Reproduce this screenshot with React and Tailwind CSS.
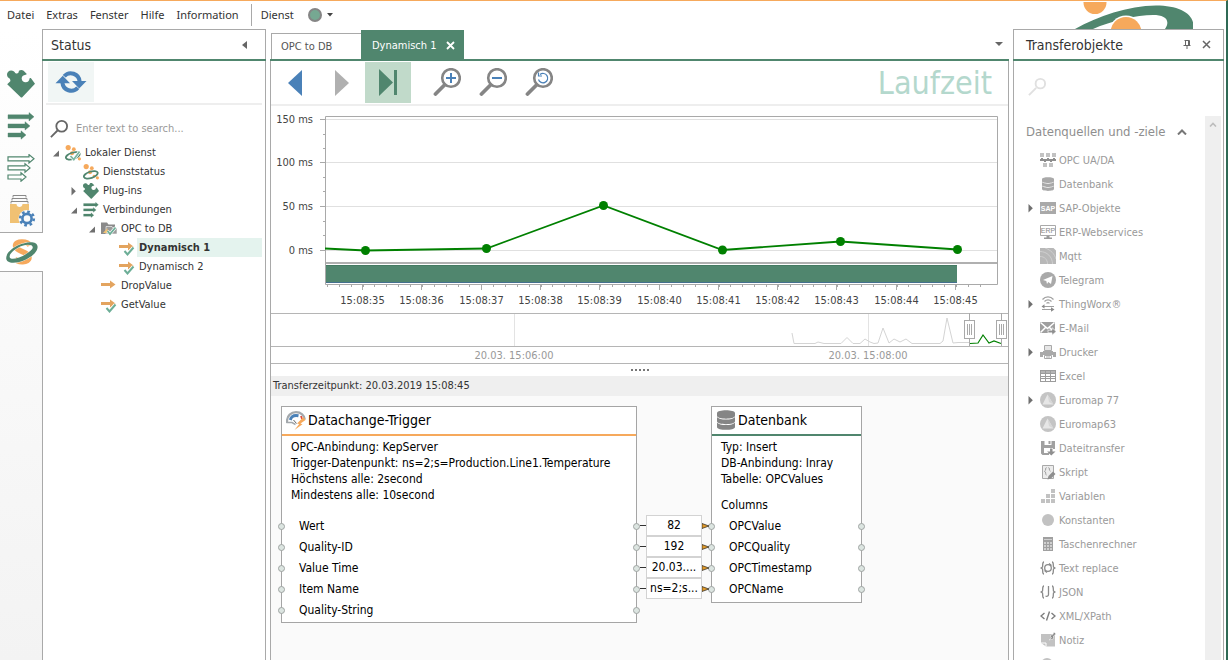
import React from "react";

const GREEN = "#50866e";
const ORANGE = "#f6a95c";
const BLUE = "#4a81b8";

/* ---------- icons ---------- */

function Puzzle({ className }) {
  return (
    <svg viewBox="0 0 28 28" className={className} fill={GREEN}>
      <path d="M.2 14.200 L3.300 11.200 C3.600 10.400 3.200 9.600 2.600 8.600 C1 8 0 6.300 0 4.600 C0 2 1.800 .4 4.200 .4 C6 .4 7.600 1.300 8.200 3 C9.600 3.800 10.600 3.600 11.400 2.800 L12 .8 C13.200 -.2 15.400 -.2 16.600 .8 L19.800 4 C19.200 5 18.300 4.800 17 5.200 C15.300 5.800 14.600 7.200 14.700 8.800 C14.900 11.100 16.700 12.400 18.800 12.200 C20.900 12 22.400 10.700 22.500 8.700 C22.600 7.800 23.200 7.600 24.200 8.400 L28 13.800 L15 27.600 H14 Z" />
    </svg>
  );
}

function Arrows({ className, outline }) {
  const p = outline
    ? { fill: "#fff", stroke: GREEN, strokeWidth: 1.2 }
    : { fill: GREEN, stroke: GREEN, strokeWidth: 0.4 };
  return (
    <svg viewBox="0 0 28 28" className={className} {...p}>
      <path d="M1 2.800 H22 V.6 L27 4.800 L22 9 V6.800 H1 Z" />
      <path d="M1 11.900 H18 V9.700 L23 13.900 L18 18.100 V15.900 H1 Z" />
      <path d="M1 21 H14 V18.800 L19 23 L14 27.200 V25 H1 Z" />
    </svg>
  );
}

function FilesGear({ className }) {
  return (
    <svg viewBox="0 0 26 32" className={className}>
      <path d="M3 2.500 V.5 H16 V2.500 M2 5.500 V3.500 H17 V5.500 M1 8.500 V6.500 H18 V8.500" fill="none" stroke="#8a8a8a" strokeWidth="1" />
      <path d="M0 9 H6.500 C6.500 13 12.500 13 12.500 9 H19 V28 H0 Z" fill="#f0c173" />
      <circle cx="17" cy="23.500" r="8.500" fill="#fafafa" />
      <circle cx="17" cy="23.500" r="6.800" fill="none" stroke={BLUE} strokeWidth="2.600" strokeDasharray="2.670 2.670" />
      <circle cx="17" cy="23.500" r="4.600" fill="none" stroke={BLUE} strokeWidth="2.600" />
    </svg>
  );
}

function ServiceLogo({ className }) {
  return (
    <svg viewBox="0 0 32 26" className={className} fill="none">
      <path d="M24 6.500 C21.500 1.800 9.500 1.500 9.500 7 C9.500 12 23 13 23 18.500 C23 24 11.500 24 8.500 19.500" stroke={ORANGE} strokeWidth="5.500" />
      <path
        fill={GREEN}
        fillRule="evenodd"
        stroke="#fff"
        strokeWidth=".9"
        paintOrder="stroke"
        d="M.3 20 C-1 12 14 3 26 3.300 C33 3.600 33 10 28.500 14.500 C21 22 7 26 2 22.500 C1 21.800 .5 21 .3 20 Z M3.800 18.500 C5.500 22.500 21 16.500 26 10.300 C29 6 22.500 4.800 16.500 6.800 C9.500 9 2.500 15 3.800 18.500 Z"
      />
    </svg>
  );
}

function Refresh({ className }) {
  return (
    <svg viewBox="0 0 32 24" className={className} fill="none">
      <path d="M9.200 6.300 A8.800 8.800 0 0 1 24.600 11.500" stroke={BLUE} strokeWidth="4" />
      <path d="M22.800 17.700 A8.800 8.800 0 0 1 7.400 12.500" stroke={BLUE} strokeWidth="4" />
      <path d="M.5 13.300 L7.800 5.800 L15 13.300 Z M17 11 H31.500 L24.200 18.500 Z" fill={BLUE} />
    </svg>
  );
}

function Magnifier({ className, stroke = "#848484", width = 2, r = 6 }) {
  return (
    <svg viewBox="0 0 20 20" className={className} fill="none" stroke={stroke} strokeWidth={width}>
      <circle cx="13" cy="7" r={r} />
      <path d="M8.600 11.400 L1 19" />
    </svg>
  );
}

function ZoomGlass({ children }) {
  return (
    <svg viewBox="0 0 28 28" className="h-7 w-7" fill="none">
      <circle cx="18" cy="10" r="8.800" stroke="#858585" strokeWidth="2.600" />
      <path d="M11.500 17 L2.500 26" stroke="#858585" strokeWidth="3.800" strokeLinecap="round" />
      {children}
    </svg>
  );
}

function MiniService({ className, check }) {
  return (
    <svg viewBox="0 0 16 16" className={className}>
      <circle cx="3.200" cy="2.600" r="2.600" fill={ORANGE} />
      <circle cx="8.800" cy="4.200" r="1.900" fill={ORANGE} />
      <circle cx="7" cy="8.300" r="2" fill={ORANGE} />
      <circle cx="14.400" cy="13.800" r="1.600" fill={ORANGE} />
      <circle cx="11" cy="12" r="1.300" fill={ORANGE} />
      <ellipse cx="7.800" cy="10.800" rx="7.200" ry="3.200" transform="rotate(-18 7.800 10.800)" fill="none" stroke={GREEN} strokeWidth="1.800" />
      {check && <path d="M5.500 11 L8.800 14.500 L14.500 6.500" fill="none" stroke="#fff" strokeWidth="3.200" />}
      {check && <path d="M5.500 11 L8.800 14.500 L14.500 6.500" fill="none" stroke="#7db7a2" strokeWidth="1.800" />}
    </svg>
  );
}

function FolderIcon({ className }) {
  return (
    <svg viewBox="0 0 16 16" className={className}>
      <path d="M0 1.500 H6 L7.500 3.500 H14 V13 H0 Z" fill="#8a8a8a" />
      <path d="M5 5.500 H11 L12 7 H16 V13 H5 Z" fill="#9b9b9b" stroke="#fff" strokeWidth=".6" />
      <path d="M2 12 L6.500 7 V9 L10 12 Z" fill="#f0c173" />
      <path d="M6.500 10 L9 13 L14.500 6.500" fill="none" stroke="#fff" strokeWidth="3" />
      <path d="M6.500 10 L9 13 L14.500 6.500" fill="none" stroke="#6dae97" strokeWidth="1.800" />
    </svg>
  );
}

function Transfer({ className, check }) {
  return (
    <svg viewBox="0 0 16 16" className={className}>
      <path d="M0 5 H9 V2.500 L14.500 6.500 L9 10.500 V8 H0 Z" fill="#e3a45f" />
      {check && (
        <>
          <path d="M5.500 11 L8.500 14.500 L14.500 7.500" fill="none" stroke="#fff" strokeWidth="3.500" />
          <path d="M5.500 11 L8.500 14.500 L14.500 7.500" fill="none" stroke="#6dae97" strokeWidth="2" />
        </>
      )}
    </svg>
  );
}

function DatabaseIcon({ className, color }) {
  return (
    <svg viewBox="0 0 18 20" className={className} fill={color}>
      <path d="M0 3 C0 -.8 18 -.8 18 3 V5.800 C18 9.600 0 9.600 0 5.800 Z" />
      <path d="M0 7 C2 10.400 16 10.400 18 7 V11.300 C18 15.100 0 15.100 0 11.300 Z" />
      <path d="M0 12.500 C2 15.900 16 15.900 18 12.500 V17 C18 20.800 0 20.800 0 17 Z" />
    </svg>
  );
}

function GaugeIcon({ className }) {
  return (
    <svg viewBox="0 0 20 19" className={className} fill="none">
      <path d="M1.200 12 C0 4 6 1.200 10 1.200 C15 1.200 18.500 4.500 18.800 8.500" stroke="#a3a8ac" strokeWidth="2.200" />
      <path d="M4.300 9 C5.300 5.200 8.500 4 12.500 4.800" stroke={BLUE} strokeWidth="3" />
      <path d="M1 11.500 H6 L9.500 13.500" stroke="#a3a8ac" strokeWidth="1.500" />
      <path d="M7.500 9 L10.500 12.500" stroke="#666" strokeWidth="1" />
      <path d="M15 5 L16 8" stroke="#e04b3a" strokeWidth="1.800" />
      <path d="M17.500 6 L11 12.500 L13.200 13 L8.500 19 L16.500 13.200 L14.500 12.500 L19.500 9 Z" fill={ORANGE} />
    </svg>
  );
}

const G1 = "#a9a9a9";
const G2 = "#c2c2c2";

const smallIcons = {
  opc: (
    <g fill={G2}>
      <path d="M0 1 h4 v4 h-4 z M6 1 h4 v4 h-4 z M12 1 h4 v4 h-4 z M3 11 h4 v4 h-4 z M9 11 h4 v4 h-4 z" />
      <path fill="#8d8d8d" d="M0 7 h16 v2 h-16 z M1 6 h2 v1 h-2 z M7 6 h2 v1 h-2 z M13 6 h2 v1 h-2 z M4 9 h2 v1 h-2 z M10 9 h2 v1 h-2 z" />
    </g>
  ),
  db: (
    <g fill={G1}>
      <path d="M2 3 C2 .5 14 .5 14 3 V5.300 C14 7.600 2 7.600 2 5.300 Z" />
      <path d="M2 6 C4 8.300 12 8.300 14 6 V9.200 C14 11.500 2 11.500 2 9.200 Z" />
      <path d="M2 10 C4 12.200 12 12.200 14 10 V13 C14 15.500 2 15.500 2 13 Z" />
    </g>
  ),
  sap: (
    <g>
      <rect y="2" width="16" height="12" fill={G1} />
      <text x="8" y="11" textAnchor="middle" fontSize="7" fontFamily="Liberation Sans, sans-serif" fontWeight="700" fill="#fff">SAP</text>
    </g>
  ),
  erp: (
    <g>
      <path d="M.5 1.500 h15 v10 h-15 z" fill="#fff" stroke={G1} />
      <text x="8" y="9" textAnchor="middle" fontSize="7" fontFamily="Liberation Sans, sans-serif" fill="#888">ERP</text>
      <path d="M6.500 12 h3 v1.500 h2.500 v1.500 h-8 v-1.500 h2.500 z" fill="#999" />
    </g>
  ),
  mqtt: (
    <g>
      <rect width="16" height="16" fill="#b8b8b8" />
      <path d="M0 3.500 C7 3.500 12.500 9 12.500 16 M0 8.500 C4.500 8.500 7.500 11.500 7.500 16 M5 0 C11 2 14.500 6 16 11" stroke="#cfcfcf" strokeWidth="1" fill="none" />
      <path d="M13.500 0 h2.500 v2.500 z" fill="#fff" />
    </g>
  ),
  telegram: (
    <g>
      <circle cx="8" cy="8" r="8" fill={G1} />
      <path d="M3 8 L12.500 4 L11 12 L8.300 10 L7 12 L6.300 9 Z" fill="#fff" />
    </g>
  ),
  thing: (
    <g fill="none" stroke="#a0a0a0" strokeWidth="1.200">
      <path d="M2.500 3.500 C5.500 0 10.500 0 13.500 3.500 M4.500 5.500 C6.500 3.300 9.500 3.300 11.500 5.500 M6.500 7.300 C7.500 6.300 8.500 6.300 9.500 7.300" />
      <path d="M2 10.500 H14 M2 13.500 H12" />
      <path d="M4.500 8.300 L1.500 10.500 L4.500 12.500 Z M11 11.300 L14.500 13.500 L11 15.700 Z" fill="#8a8a8a" stroke="none" />
    </g>
  ),
  mail: (
    <g>
      <rect y="2" width="15" height="11" fill="#9f9f9f" />
      <path d="M.5 2.500 L7.500 8.500 L14.500 2.500 M.5 12.500 L5.500 7.500 M14.500 12.500 L9.500 7.500" stroke="#fff" strokeWidth="1.500" fill="none" />
      <path d="M8 10.200 h4 v-2.500 l4.300 3.800 l-4.300 3.800 v-2.500 h-4 z" fill="#8f8f8f" stroke="#fff" strokeWidth=".7" />
    </g>
  ),
  printer: (
    <g>
      <path d="M4.500 1.500 h7 v5 h-7 z" fill="#e6e6e6" stroke={G1} />
      <path d="M0 8 h3 v-1 h10 v1 h3 v5 h-3 v-2 h-10 v2 h-3 z" fill={G1} />
      <path d="M4.500 11.500 h7 v3 h-7 z" fill="#fff" stroke={G1} />
      <path d="M6 13 h4" stroke={G1} />
    </g>
  ),
  excel: (
    <g>
      <rect y="2" width="16" height="12" fill="#9c9c9c" />
      <path d="M1 6 h4 v2 h-4 z M6 6 h4 v2 h-4 z M11 6 h4 v2 h-4 z M1 9 h4 v1 h-4 z M6 9 h4 v1 h-4 z M11 9 h4 v1 h-4 z M1 11 h4 v2 h-4 z M6 11 h4 v2 h-4 z M11 11 h4 v2 h-4 z" fill="#fff" />
      <path d="M1 3 h4 v2 h-4 z M6 3 h4 v2 h-4 z M11 3 h4 v2 h-4 z" fill="#b5b5b5" />
    </g>
  ),
  euro: (
    <g>
      <circle cx="8" cy="8" r="8" fill="#c4c4c4" />
      <path d="M2.500 12.500 L7.500 2.500 L13.500 12.500 Z" fill="#e6e6e6" />
      <path d="M7.500 2.500 L13.500 12.500 L9 10 Z" fill="#d6d6d6" />
    </g>
  ),
  save: (
    <g>
      <path d="M1 1 h14 v8 h-2 v-1 h-9 v5 h5 v2 h-6.500 l-1.500 -1.500 z" fill="#a0a0a0" />
      <path d="M4.500 1 h7 v4 h-7 z" fill="#fff" />
      <path d="M8.500 1 h2 v3 h-2 z" fill="#a0a0a0" />
      <path d="M10 8.500 h2.500 v3 h3 l-4.200 4 l-4.200 -4 h3 z" fill="#8f8f8f" />
    </g>
  ),
  script: (
    <g>
      <path d="M2.500 1.500 h11 v13 h-11 z" fill="#ececec" stroke={G1} />
      <path d="M6.500 3.500 C5 3.500 6.500 6.500 4.500 7.200 C6.500 8 5 11 6.500 11 M8.500 3.500 C10 3.500 8.500 6.500 10.500 7.200" fill="none" stroke="#9a9a9a" />
      <path d="M7.500 15.500 L8.500 12 L13 7.500 L15.500 10 L11 14.500 Z" fill="#8f8f8f" />
    </g>
  ),
  vars: (
    <path fill={G2} d="M11 1 h4 v4 h-4 z M11 6 h4 v4 h-4 z M11 11 h4 v4 h-4 z M6 6 h4 v4 h-4 z M6 11 h4 v4 h-4 z M1 11 h4 v4 h-4 z" />
  ),
  konst: <circle cx="8" cy="8" r="6" fill={G2} />,
  calc: (
    <g>
      <rect x="3" y="1" width="10" height="14" fill="#a0a0a0" />
      <path d="M4 3 h8 v1 h-8 z M4 6 h2 v2 h-2 z M7 6 h2 v2 h-2 z M10 6 h2 v2 h-2 z M4 9 h2 v2 h-2 z M7 9 h2 v2 h-2 z M10 9 h2 v2 h-2 z M4 12 h2 v2 h-2 z M7 12 h2 v2 h-2 z M10 12 h2 v2 h-2 z" fill="#d0d0d0" />
    </g>
  ),
  replace: (
    <g fill="none" stroke="#8a8a8a" strokeWidth="1.300">
      <path d="M4 2 C2 2 3 6 2.500 7 L1 8 L2.500 9 C3 10 2 14 4 14 M12 2 C14 2 13 6 13.500 7 L15 8 L13.500 9 C13 10 14 14 12 14" />
      <circle cx="8" cy="8" r="3.300" />
      <path d="M9 3.500 L11.500 5.500 M4.500 10.500 L7 12.500" />
    </g>
  ),
  json: (
    <g fill="none" stroke="#8a8a8a" strokeWidth="1.300">
      <path d="M4 2 C2 2 3 6 2.500 7 L1 8 L2.500 9 C3 10 2 14 4 14 M12 2 C14 2 13 6 13.500 7 L15 8 L13.500 9 C13 10 14 14 12 14" />
      <path d="M8.500 2 V10.500 C8.500 12.500 6.500 12.500 5.500 12" />
    </g>
  ),
  xml: (
    <path d="M4.500 5 L1 8 L4.500 11 M11.500 5 L15 8 L11.500 11 M9.500 3.500 L6.500 12.500" fill="none" stroke="#7d7d7d" strokeWidth="1.400" />
  ),
  note: (
    <g>
      <path d="M1 2 h14 v12.500 h-9 l-5 -3.500 z" fill={G2} />
      <path d="M1 11 h5 v3.500" fill="none" stroke="#fff" />
      <path d="M9 8 L11.500 5.500 L10 4 L11 3 L12.500 3 L14 0 L16 2 L13.500 4 L13.500 6.500 L12.500 7 Z" fill="#8a8a8a" stroke="#fff" strokeWidth=".5" />
    </g>
  ),
  clock: <circle cx="7" cy="8" r="6" fill={G2} />,
};

function SmallIcon({ name }) {
  return <svg viewBox="0 0 16 16" className="h-4 w-4 shrink-0">{smallIcons[name]}</svg>;
}

function Expander({ open }) {
  return (
    <svg viewBox="0 0 12 12" className="h-3 w-3 shrink-0" fill="#6f6f6f">
      {open === true && <path d="M2 9.500 H8 V3.500 Z" />}
      {open === false && <path d="M2.500 2 L6.800 6.200 L2.500 10.500 Z" />}
    </svg>
  );
}

/* ---------- header ---------- */

function MenuBar() {
  return (
    <header className="relative flex h-7 items-center overflow-hidden pl-[7px] font-['Noto_Sans',sans-serif] text-[11px] text-[#333]">
      <nav className="flex items-center gap-3">
        {["Datei", "Extras", "Fenster", "Hilfe", "Information"].map((m) => (
          <button key={m} type="button">{m}</button>
        ))}
      </nav>
      <span className="ml-3 h-[22px] w-px bg-[#a9a9a9]" />
      <button type="button" className="ml-[9px]">Dienst</button>
      <button type="button" aria-label="Dienststatus" className="ml-[14px] flex items-center gap-[5px]">
        <span className="h-[14px] w-[14px] rounded-full border-2 border-[#858585] bg-[#76a892]" />
        <svg viewBox="0 0 6 4" className="h-1 w-[6px]" fill="#444"><path d="M0 0 H6 L3 3.500 Z" /></svg>
      </button>
      <svg viewBox="0 0 120 27" className="absolute right-[33px] bottom-0 h-[27px] w-[120px]">
        <path fill={GREEN} fillRule="evenodd" d="M2 27 C25 14 55 4 83 3.500 C108 3.500 123 13 120 27 H92 C98 18 92 13 80 13 C64 13 38 19 20 27 Z" />
        <circle cx="22" cy="0.500" r="11.500" fill={ORANGE} />
        <circle cx="53" cy="30.500" r="17" fill="#fff" />
        <circle cx="53" cy="30.500" r="15.500" fill={ORANGE} />
      </svg>
    </header>
  );
}

/* ---------- left ---------- */

function SideBar() {
  return (
    <aside className="flex w-[42px] shrink-0 flex-col bg-linear-to-b from-white to-[#f3f3f3]">
      <div className="h-[34px]" />
      <div className="flex flex-col">
        <button type="button" aria-label="Plug-ins" className="flex h-[42px] items-center justify-center"><Puzzle className="h-7 w-7" /></button>
        <button type="button" aria-label="Verbindungen" className="flex h-[42px] items-center justify-center"><Arrows className="h-7 w-7" /></button>
        <button type="button" aria-label="Vorlagen" className="flex h-[42px] items-center justify-center"><Arrows outline className="h-7 w-7" /></button>
        <button type="button" aria-label="Konfiguration" className="flex h-[43px] items-center justify-center pl-1"><FilesGear className="h-8 w-[26px]" /></button>
      </div>
      <button type="button" aria-label="Status" className="relative z-10 -mr-px flex h-10 items-center justify-center border-y border-[#a9a9a9] bg-white">
        <ServiceLogo className="h-[26px] w-8" />
      </button>
    </aside>
  );
}

const indent = ["pl-[8px]", "pl-[26px]", "pl-[44px]", "pl-[62px]"];

const tree = [
  { l: 0, open: true, icon: <MiniService check className="h-4 w-4" />, t: "Lokaler Dienst" },
  { l: 1, icon: <MiniService className="h-4 w-4" />, t: "Dienststatus" },
  { l: 1, open: false, icon: <Puzzle className="h-4 w-4" />, t: "Plug-ins" },
  { l: 1, open: true, icon: <Arrows className="h-4 w-4" />, t: "Verbindungen" },
  { l: 2, open: true, icon: <FolderIcon className="h-4 w-4" />, t: "OPC to DB" },
  { l: 3, icon: <Transfer check className="h-4 w-4" />, t: "Dynamisch 1", sel: true },
  { l: 3, icon: <Transfer check className="h-4 w-4" />, t: "Dynamisch 2" },
  { l: 2, icon: <Transfer className="h-4 w-4" />, t: "DropValue" },
  { l: 2, icon: <Transfer check className="h-4 w-4" />, t: "GetValue" },
];

function StatusPanel() {
  return (
    <section className="flex w-[224px] shrink-0 flex-col border border-b-0 border-[#a9a9a9] bg-white">
      <div className="-mx-px flex h-[31px] items-center justify-between border-b-2 border-[#50866e] pr-[18px] pl-[9px]">
        <h2 className="pt-px text-[14px] text-[#333]">Status</h2>
        <button type="button" aria-label="Einklappen">
          <svg viewBox="0 0 6 8" className="h-2 w-[6px]" fill="#666"><path d="M5 0 V8 L0 4 Z" /></svg>
        </button>
      </div>
      <div className="mx-[3px] flex h-[44px] border-b-2 border-[#eee] pt-px pl-[2px]">
        <button type="button" aria-label="Aktualisieren" className="flex h-10 w-[46px] items-center justify-center bg-[#f1f6f5]">
          <Refresh className="h-6 w-8" />
        </button>
      </div>
      <label className="flex h-[38px] items-center gap-2 pt-[10px] pl-[7px]">
        <Magnifier className="h-[18px] w-[18px] shrink-0" stroke="#666" />
        <input type="text" aria-label="Suchen" placeholder="Enter text to search..." className="w-full min-w-0 pt-px text-[11px] outline-none placeholder:text-[#9a9a9a]" />
      </label>
      <ul className="text-[11px] text-[#333]">
        {tree.map((n) => (
          <li key={n.t} className={"flex h-[19px] items-center pr-[3px] " + indent[n.l]}>
            <Expander open={n.open} />
            <span className="ml-[2px] flex shrink-0">{n.icon}</span>
            <span className={n.sel ? "ml-[2px] flex h-full flex-1 items-center bg-[#e4f3ee] pt-px pl-[2px] font-bold" : "ml-1 pt-px"}>{n.t}</span>
          </li>
        ))}
      </ul>
    </section>
  );
}

/* ---------- chart ---------- */

const points = [
  [54, 142.5], [94.5, 144.5], [215.5, 142.5], [332.5, 99.5], [451.5, 144], [569.5, 135.5], [686.5, 143.5],
];
const yTicks = [["150 ms", 13.5], ["100 ms", 56.5], ["50 ms", 100.5], ["0 ms", 144.5]];
const times = ["35", "36", "37", "38", "39", "40", "41", "42", "43", "44", "45"];
const minorX = Array.from({ length: 56 }, (_, i) => 56.5 + Math.round(i * 11.865));

function Chart() {
  return (
    <svg viewBox="0 0 737 207" className="block h-auto w-full" fontSize="11" fill="#444">
      {yTicks.map(([t, y], i) => (
        <g key={t}>
          <path d={`M55 ${y} H726`} stroke="#e0e0e0" />
          <path d={`M49 ${y} H54`} stroke="#a9a9a9" />
          {i < 3 && <path d={`M52 ${y + 15} H54 M52 ${y + 29} H54`} stroke="#a9a9a9" />}
          <text x="42" y={y + 3.5} textAnchor="end">{t}</text>
        </g>
      ))}
      <path d="M54.500 10.500 H726.500 V178.500 H54.500 Z" fill="none" stroke="#a9a9a9" />
      <path d="M55 157 H726" stroke="#b0b0b0" strokeWidth="2" />
      <rect x="55" y="159" width="631" height="18" fill={GREEN} />
      <path d="M55 176.500 H686" stroke="#44708e" />
      <path d="M55 159.500 H686" stroke="#447a62" />
      {minorX.map((x) => <path key={x} d={`M${x} 179 V181`} stroke="#a9a9a9" />)}
      {times.map((s, i) => {
        const x = 91.5 + Math.round(i * 59.3);
        return (
          <g key={s}>
            <path d={`M${x} 179 V184`} stroke="#a9a9a9" />
            <text x={x} y="198" textAnchor="middle">{`15:08:${s}`}</text>
          </g>
        );
      })}
      <polyline points={points.map((p) => p.join(",")).join(" ")} fill="none" stroke="#008000" strokeWidth="1.800" />
      {points.slice(1).map(([x, y]) => <circle key={x} cx={x} cy={y} r="4.500" fill="#008000" />)}
    </svg>
  );
}

function Handle({ x }) {
  return (
    <g stroke="#a9a9a9">
      <path d={`M${x} 0 V33`} />
      <rect x={x - 5} y="7.500" width="10" height="18" fill="#fff" />
      <path d={`M${x - 2} 11 V22 M${x} 11 V22 M${x + 2} 11 V22`} />
    </g>
  );
}

function Overview() {
  return (
    <svg viewBox="0 0 737 51" className="block h-auto w-full" fontSize="11" fill="#999">
      <path d="M0 .5 H737 M0 33.500 H737 M0 50.500 H737" stroke="#b5b5b5" />
      <path d="M243.500 1 V33 M597.500 1 V33" stroke="#e3e3e3" />
      <text x="243" y="46" textAnchor="middle">20.03. 15:06:00</text>
      <text x="597" y="46" textAnchor="middle">20.03. 15:08:00</text>
      <polyline fill="none" stroke="#d4d4d4" points="521,20 523,30.500 544,30.500 547,29 553,30.500 570,30.500 576,24.500 582,30.500 589,30.500 594,26 599,29 603,30.500 607,30 612,15 618,30 623,26 629,29 635,26 641,30.500 669,30.500 672,28 676,5 682,30 687,29.500 698,29.500" />
      <polyline fill="none" stroke="#008000" strokeWidth="1.200" points="699,30.500 707,30 712,22 718,30 723,28 730,30.500" />
      <Handle x={698.5} />
      <Handle x={730.5} />
    </svg>
  );
}

/* ---------- node editor ---------- */

function Port({ side }) {
  return (
    <span className={"absolute top-[7px] h-[7px] w-[7px] rounded-full border border-[#a0a5a3] bg-[#dce5e1] " + (side === "l" ? "-left-1" : "-right-1")} />
  );
}

function NodeCard({ title, icon, accent, place, info, ports, section }) {
  return (
    <article className={"absolute border border-[#a5a5a5] bg-white text-[12px] leading-4 text-black " + place}>
      <h3 className={"flex h-[29px] items-center gap-[2px] border-b-2 pb-px pl-1 text-[14px] " + accent}>
        {icon}
        {title}
      </h3>
      <div className="px-[9px] pt-[3px]">
        {info.map((t) => <p key={t} className="whitespace-nowrap">{t}</p>)}
        {section && <p className="pt-[10px]">{section}</p>}
      </div>
      <ul className={section ? "pt-[3px]" : "pt-[13px]"}>
        {ports.map((p) => (
          <li key={p} className="relative h-[21px] pl-[17px] leading-[21px]">
            <Port side="l" />
            {p}
            <Port side="r" />
          </li>
        ))}
      </ul>
    </article>
  );
}

function Canvas() {
  return (
    <div className="relative flex-1 overflow-hidden bg-[#fafafa]">
      <NodeCard
        title="Datachange-Trigger"
        icon={<GaugeIcon className="h-[19px] w-5" />}
        accent="border-[#f6a95c]"
        place="left-[10px] top-[10px] w-[356px] h-[217px]"
        info={["OPC-Anbindung: KepServer", "Trigger-Datenpunkt: ns=2;s=Production.Line1.Temperature", "Höchstens alle: 2second", "Mindestens alle: 10second"]}
        ports={["Wert", "Quality-ID", "Value Time", "Item Name", "Quality-String"]}
      />
      <NodeCard
        title="Datenbank"
        icon={<DatabaseIcon className="h-5 w-5" color="#858585" />}
        accent="border-[#50866e]"
        place="left-[440px] top-[10px] w-[151px] h-[197px]"
        info={["Typ: Insert", "DB-Anbindung: Inray", "Tabelle: OPCValues"]}
        section="Columns"
        ports={["OPCValue", "OPCQuality", "OPCTimestamp", "OPCName"]}
      />
      <ul className="absolute top-[119px] left-[369px] w-[70px] text-[12px]">
        {["82", "192", "20.03....", "ns=2;s..."].map((v) => (
          <li key={v} className="flex h-[21px] items-center">
            <span className="h-px w-[6px] shrink-0 bg-[#333]" />
            <span className="h-[21px] w-[56px] shrink-0 border border-[#d3d3d3] bg-white text-center leading-[18px] whitespace-nowrap text-black">{v}</span>
            <svg viewBox="0 0 8 6" className="h-[6px] w-2 shrink-0"><path d="M0 .5 L7 3 L0 5.500 Z" fill="#e09a2a" stroke="#222" strokeWidth=".7" /></svg>
          </li>
        ))}
      </ul>
    </div>
  );
}

function MainPane() {
  return (
    <main className="flex min-w-0 flex-1 flex-col pt-px">
      <div className="flex h-[31px] items-end border-b-2 border-[#50866e]" role="tablist">
        <button type="button" role="tab" className="ml-px h-[26px] w-[90px] border border-r-0 border-b-0 border-[#a9a9a9] bg-white pt-px pl-[9px] text-left text-[11px] text-[#555]">OPC to DB</button>
        <div className="flex h-[29px] w-[103px] items-center justify-between bg-[#50866e] pt-[2px] pr-[9px] pl-[11px] text-white">
          <button type="button" role="tab" aria-selected="true" className="pt-px text-[11px]">Dynamisch 1</button>
          <button type="button" aria-label="Schließen">
            <svg viewBox="0 0 9 9" className="h-[9px] w-[9px]" stroke="#fff" strokeWidth="1.800"><path d="M1 1 L8 8 M8 1 L1 8" /></svg>
          </button>
        </div>
        <button type="button" aria-label="Weitere Tabs" className="mr-[6px] mb-[13px] ml-auto">
          <svg viewBox="0 0 8 4" className="h-1 w-2" fill="#666"><path d="M0 0 H8 L4 4 Z" /></svg>
        </button>
      </div>
      <div className="flex flex-1 flex-col border-x border-[#a9a9a9] bg-white">
        <div className="flex h-[45px] items-center border-b-2 border-[#eee]">
          <button type="button" aria-label="Zurück" className="flex w-[47px] justify-center">
            <svg viewBox="0 0 14 26" className="h-[26px] w-[14px]" fill={BLUE}><path d="M14 0 V26 L0 13 Z" /></svg>
          </button>
          <button type="button" aria-label="Vor" className="flex w-[47px] justify-center">
            <svg viewBox="0 0 14 26" className="h-[26px] w-[14px]" fill="#b0b0b0"><path d="M0 0 V26 L14 13 Z" /></svg>
          </button>
          <button type="button" aria-label="Zum Ende" className="flex h-[41px] w-[46px] items-center justify-center bg-[#c1daca]">
            <svg viewBox="0 0 18 27" className="h-[27px] w-[18px]" fill={GREEN}><path d="M0 0 V27 L14 13.500 Z M15 1 H18 V26 H15 Z" /></svg>
          </button>
          <div className="ml-[13px] flex">
            <button type="button" aria-label="Vergrößern" className="flex w-[46px] justify-center pb-[2px]">
              <ZoomGlass><path d="M18 5 V15 M13 10 H23" stroke={BLUE} strokeWidth="2" /></ZoomGlass>
            </button>
            <button type="button" aria-label="Verkleinern" className="flex w-[46px] justify-center pb-[2px]">
              <ZoomGlass><path d="M13 10 H23" stroke={BLUE} strokeWidth="2" /></ZoomGlass>
            </button>
            <button type="button" aria-label="Zoom zurücksetzen" className="flex w-[46px] justify-center pb-[2px]">
              <ZoomGlass>
                <path d="M15 6.500 A4.700 4.700 0 1 1 13.500 11.500" stroke={BLUE} strokeWidth="1.200" />
                <path d="M13.500 4.500 V8 H17" stroke={BLUE} strokeWidth="1.200" />
              </ZoomGlass>
            </button>
          </div>
          <span className="mr-4 ml-auto text-[32px] leading-10 text-[#b4d8cd]">Laufzeit</span>
        </div>
        <Chart />
        <Overview />
        <div className="flex h-3 items-center justify-center gap-[2px]">
          {[0, 1, 2, 3, 4].map((i) => <span key={i} className="h-[2px] w-[2px] bg-[#777]" />)}
        </div>
        <div className="flex h-5 items-center bg-[#efefef] pl-[2px] text-[11px] text-[#333]">Transferzeitpunkt: 20.03.2019 15:08:45</div>
        <Canvas />
      </div>
    </main>
  );
}

/* ---------- right ---------- */

const objects = [
  ["opc", "OPC UA/DA"], ["db", "Datenbank"], ["sap", "SAP-Objekte", true], ["erp", "ERP-Webservices"],
  ["mqtt", "Mqtt"], ["telegram", "Telegram"], ["thing", "ThingWorx®", true], ["mail", "E-Mail"],
  ["printer", "Drucker", true], ["excel", "Excel"], ["euro", "Euromap 77", true], ["euro", "Euromap63"],
  ["save", "Dateitransfer"], ["script", "Skript"], ["vars", "Variablen"], ["konst", "Konstanten"],
  ["calc", "Taschenrechner"], ["replace", "Text replace"], ["json", "JSON"], ["xml", "XML/XPath"],
  ["note", "Notiz"], ["clock", ""],
];

function ObjectsPanel() {
  return (
    <section className="mr-[2px] flex w-[211px] shrink-0 flex-col border border-b-0 border-[#a9a9a9] bg-white">
      <div className="-mx-px flex h-[31px] shrink-0 items-center border-b-2 border-[#50866e] pr-[13px] pl-[13px]">
        <h2 className="flex-1 pt-px text-[14px] text-[#333]">Transferobjekte</h2>
        <button type="button" aria-label="Anheften" className="mr-[11px]">
          <svg viewBox="0 0 8 9" className="h-[9px] w-2" fill="none" stroke="#666"><path d="M1.500 .5 H6.500 M2.500 .5 V5 M5.500 .5 V5 M6.500 .5 V5 M.5 5.500 H7.500 M4 5.500 V9" /></svg>
        </button>
        <button type="button" aria-label="Schließen">
          <svg viewBox="0 0 9 9" className="h-[9px] w-[9px]" stroke="#666" strokeWidth="1.500"><path d="M1 1 L8 8 M8 1 L1 8" /></svg>
        </button>
      </div>
      <button type="button" aria-label="Suchen" className="mt-[16px] ml-[14px] self-start">
        <Magnifier className="h-[19px] w-[19px]" stroke="#e0e0e0" r={5} />
      </button>
      <div className="mt-5 flex min-h-0 flex-1 overflow-hidden pr-[2px]">
        <div className="flex-1">
          <button type="button" className="flex h-8 items-center gap-3 pl-3 text-[13px] text-[#8e8e8e]">
            Datenquellen und -ziele
            <svg viewBox="0 0 10 6" className="h-[6px] w-[10px]" fill="none" stroke="#777" strokeWidth="2"><path d="M1 5.500 L5 1.500 L9 5.500" /></svg>
          </button>
          <ul className="text-[11px] text-[#9a9a9a]">
            {objects.map(([icon, t, exp]) => (
              <li key={icon + t} className="flex h-6 items-center pl-3">
                <Expander open={exp ? false : undefined} />
                <span className="ml-[2px] flex"><SmallIcon name={icon} /></span>
                <span className="ml-[3px] pt-[2px]">{t}</span>
              </li>
            ))}
          </ul>
        </div>
        <div className="w-4 bg-[#efefef] pt-[6px]">
          <svg viewBox="0 0 8 5" className="mx-auto h-[5px] w-2" fill="none" stroke="#bdbdbd" strokeWidth="1.600"><path d="M1 4.500 L4 1.500 L7 4.500" /></svg>
        </div>
      </div>
    </section>
  );
}

export default function App() {
  return (
    <div className="flex h-screen flex-col overflow-hidden border-t border-r-2 border-t-[#f6a95c] border-r-[#2f6a55] bg-white font-['DejaVu_Sans_Condensed','DejaVu_Sans',sans-serif]">
      <MenuBar />
      <div className="flex min-h-0 flex-1">
        <SideBar />
        <StatusPanel />
        <div className="flex min-w-0 flex-1 px-1">
          <MainPane />
        </div>
        <ObjectsPanel />
      </div>
    </div>
  );
}
